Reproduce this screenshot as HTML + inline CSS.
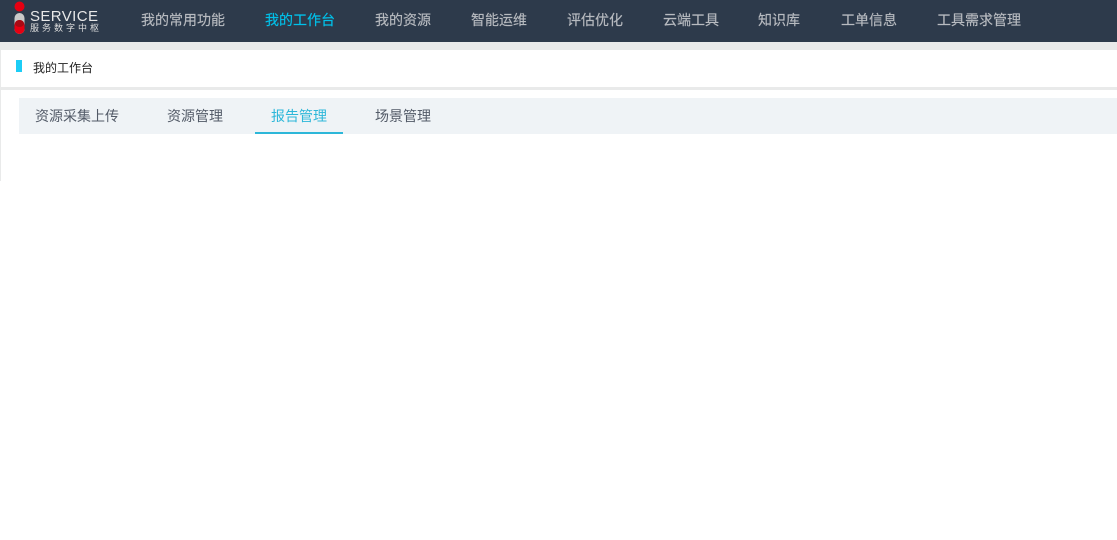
<!DOCTYPE html>
<html lang="zh">
<head>
<meta charset="utf-8">
<title>我的工作台</title>
<style>
html,body{margin:0;padding:0;width:1117px;height:540px;overflow:hidden;background:#fff;font-family:"Liberation Sans","Noto Sans CJK SC",sans-serif}
div,span{position:absolute;white-space:nowrap}
.nav{left:0;top:0;width:1117px;height:42px;background:#2d3a4b}
.n{top:10px;font-size:14px;line-height:20px;color:#b8bbc0;font-weight:400;-webkit-text-stroke:.15px currentColor}
.t{top:106px;font-size:14px;line-height:20px;color:#525a67}
</style>
</head>
<body>
<div class="nav"></div>
<svg style="position:absolute;left:12px;top:0" width="16" height="36" viewBox="0 0 16 36">
<circle cx="7.5" cy="6.5" r="5" fill="#e60012"/>
<rect x="2.5" y="13" width="10" height="21" rx="5" fill="#c9c9c9"/>
<path d="M2.5 25a5 5 0 0 1 10 0v4a5 5 0 0 1-10 0z" fill="#e60012"/>
<ellipse cx="7.5" cy="23.5" rx="4.5" ry="3.5" fill="#a80a14"/>
</svg>
<div style="left:30px;top:9px;font-size:15px;line-height:15px;letter-spacing:.4px;color:#e8e8e8">SERVICE</div>
<div style="left:30px;top:23px;font-size:9px;line-height:10px;letter-spacing:3px;color:#dcdcdc">服务数字中枢</div>
<span class="n" style="left:141px">我的常用功能</span>
<span class="n" style="left:265px;color:#00c1ea">我的工作台</span>
<span class="n" style="left:375px">我的资源</span>
<span class="n" style="left:471px">智能运维</span>
<span class="n" style="left:567px">评估优化</span>
<span class="n" style="left:663px">云端工具</span>
<span class="n" style="left:758px">知识库</span>
<span class="n" style="left:841px">工单信息</span>
<span class="n" style="left:937px">工具需求管理</span>
<div style="left:0;top:42px;width:1117px;height:8px;background:#e9eaea"></div>
<div style="left:0;top:50px;width:1px;height:37px;background:#e9eaea"></div>
<div style="left:16px;top:60px;width:6px;height:12px;background:#1ccdf6"></div>
<div style="left:33px;top:58px;font-size:12px;line-height:20px;color:#222">我的工作台</div>
<div style="left:0;top:87px;width:1117px;height:3px;background:#e9eaea"></div>
<div style="left:0;top:90px;width:1px;height:91px;background:#e9eaea"></div>
<div style="left:19px;top:98px;width:1098px;height:36px;background:#eff3f6"></div>
<span class="t" style="left:35px">资源采集上传</span>
<span class="t" style="left:167px">资源管理</span>
<span class="t" style="left:271px;color:#2db7d9">报告管理</span>
<span class="t" style="left:375px">场景管理</span>
<div style="left:255px;top:132px;width:88px;height:2px;background:#2db7d9"></div>
</body>
</html>
